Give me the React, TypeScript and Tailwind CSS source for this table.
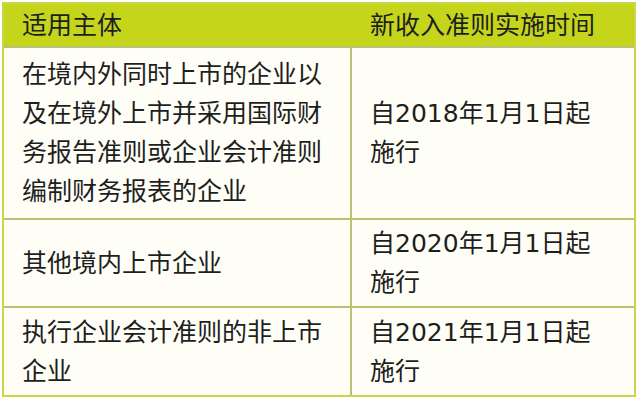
import React from "react";

const rows = [
  {
    left: ["在境内外同时上市的企业以", "及在境外上市并采用国际财", "务报告准则或企业会计准则", "编制财务报表的企业"],
    year: "2018",
    h: "h-[172px]",
  },
  { left: ["其他境内上市企业"], year: "2020", h: "h-[88px]" },
  { left: ["执行企业会计准则的非上市", "企业"], year: "2021", h: "h-[89px]" },
];

const font = { fontFamily: '"DejaVu Sans", "Noto Sans CJK SC", sans-serif' };

export default function App() {
  return (
    <div className="w-[640px] h-[404px] bg-white pt-[2px] pl-[2px]" style={font}>
      <div className="w-[634px] border-2 border-[#c9d64a] bg-[#fefef7] text-[25px] leading-[39px] text-[#1e1e1e]">
        <div className="flex h-[42px] bg-[#c4d51b] items-center">
          <div className="w-[348px] pl-[18px]">适用主体</div>
          <div className="flex-1 pl-[18px]">新收入准则实施时间</div>
        </div>
        {rows.map((r, i) => (
          <div key={i} className={`flex ${r.h} border-t-2 border-[#b8c274]`}>
            <div className="w-[346px] pl-[18px] flex flex-col justify-center">
              {r.left.map((l) => (
                <div key={l}>{l}</div>
              ))}
            </div>
            <div className="flex-1 border-l-2 border-[#b8c274] pl-[18px] flex flex-col justify-center">
              <div>自{r.year}年1月1日起</div>
              <div>施行</div>
            </div>
          </div>
        ))}
      </div>
    </div>
  );
}
